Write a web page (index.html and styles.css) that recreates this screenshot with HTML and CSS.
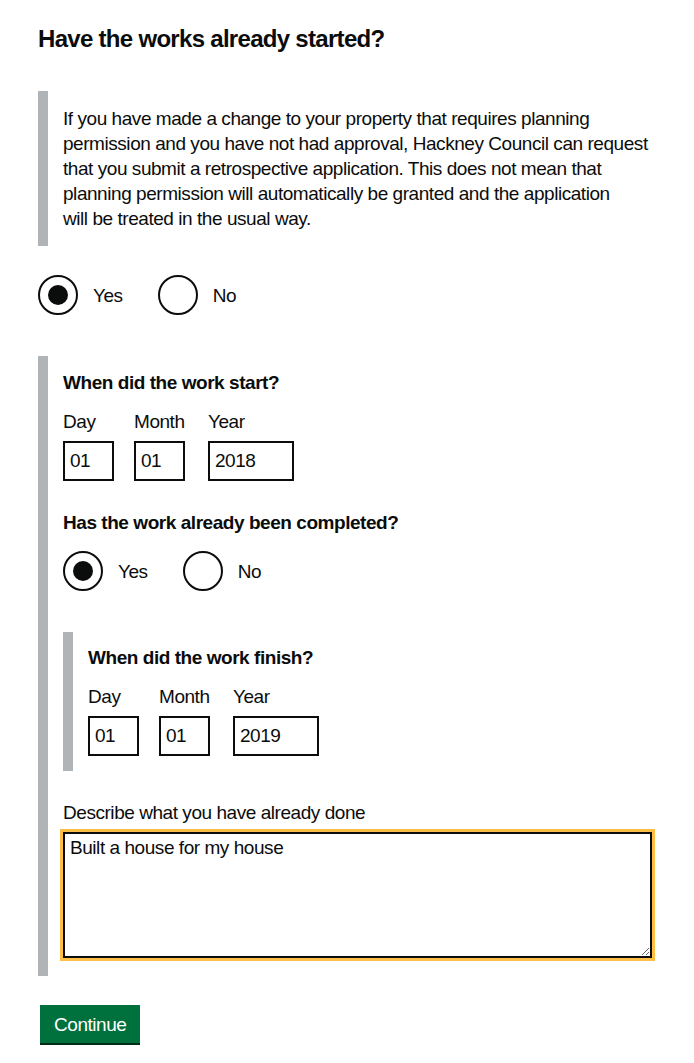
FILE: index.html
```html
<!DOCTYPE html>
<html lang="en">
<head>
<meta charset="utf-8">
<title>Have the works already started?</title>
<link rel="stylesheet" href="styles.css">
</head>
<body>
<main class="page">
  <h1 class="heading">Have the works already started?</h1>

  <div class="inset">If you have made a change to your property that requires planning permission and you have not had approval, Hackney Council can request that you submit a retrospective application. This does not mean that planning permission will automatically be granted and the application<br>will be treated in the usual way.</div>

  <div class="radios radios-main">
    <label class="radio"><span class="radio-circle is-checked"></span><span class="radio-label">Yes</span></label>
    <label class="radio"><span class="radio-circle"></span><span class="radio-label">No</span></label>
  </div>

  <div class="conditional conditional-outer">
    <div class="legend">When did the work start?</div>
    <div class="date">
      <div class="date-item item-day"><label class="date-label">Day</label><div class="input input-2">01</div></div>
      <div class="date-item item-month"><label class="date-label">Month</label><div class="input input-2">01</div></div>
      <div class="date-item item-year"><label class="date-label">Year</label><div class="input input-4">2018</div></div>
    </div>

    <div class="legend legend-completed">Has the work already been completed?</div>
    <div class="radios radios-inner">
      <label class="radio"><span class="radio-circle is-checked"></span><span class="radio-label">Yes</span></label>
      <label class="radio"><span class="radio-circle"></span><span class="radio-label">No</span></label>
    </div>

    <div class="conditional conditional-inner">
      <div class="legend">When did the work finish?</div>
      <div class="date">
        <div class="date-item item-day"><label class="date-label">Day</label><div class="input input-2">01</div></div>
        <div class="date-item item-month"><label class="date-label">Month</label><div class="input input-2">01</div></div>
        <div class="date-item item-year"><label class="date-label">Year</label><div class="input input-4">2019</div></div>
      </div>
    </div>

    <label class="field-label" for="done">Describe what you have already done</label>
    <textarea class="textarea" id="done" rows="5">Built a house for my house</textarea>
  </div>

  <button class="button" type="button">Continue</button>
</main>
</body>
</html>
```

FILE: styles.css
```css
* { box-sizing: border-box; }

body {
  margin: 0;
  background: #ffffff;
  color: #0b0c0c;
  font-family: "Liberation Sans", Arial, sans-serif;
  font-size: 19px;
  line-height: 25px;
  letter-spacing: -0.45px;
}

.page {
  width: 652px;
  padding: 24px 0 20px 38px;
}

.heading {
  margin: 0 0 37px;
  font-size: 24px;
  line-height: 30px;
  font-weight: 700;
  letter-spacing: -0.7px;
}

.inset {
  border-left: 10px solid #b1b4b6;
  padding: 15px 0 15px 15px;
  margin: 0 0 29px;
}

.radios {
  display: flex;
  gap: 20px;
}

.radios-main { margin-bottom: 41px; }
.radios-inner { margin-bottom: 41px; }

.radio {
  display: flex;
  align-items: center;
  height: 40px;
}

.radio-circle {
  position: relative;
  width: 40px;
  height: 40px;
  border: 2px solid #0b0c0c;
  border-radius: 50%;
  flex: none;
}

.radio-circle.is-checked::after {
  content: "";
  position: absolute;
  left: 8px;
  top: 8px;
  width: 20px;
  height: 20px;
  border-radius: 50%;
  background: #0b0c0c;
}

.radio-label {
  padding: 0 15px;
}

.conditional {
  border-left: 10px solid #b1b4b6;
  padding-left: 15px;
}

.conditional-outer {
  padding-top: 13.5px;
  padding-bottom: 18px;
  margin-bottom: 29px;
}

.conditional-inner {
  padding-top: 12.5px;
  padding-bottom: 15px;
  margin-bottom: 28.5px;
}

.legend {
  font-weight: 700;
  margin-bottom: 14px;
}

.legend-completed {
  margin-top: 28.5px;
  margin-bottom: 16.5px;
}

.date {
  display: flex;
  gap: 20px;
}

.item-day { width: 51px; }
.item-month { width: 54px; }
.item-year { width: 86px; }

.date-label {
  display: block;
  margin-bottom: 7.5px;
}

.input {
  height: 40px;
  border: 2px solid #0b0c0c;
  padding: 5px;
  line-height: 26px;
}

.input-2 { width: 51px; }
.input-4 { width: 86px; }

.field-label {
  display: block;
  margin-bottom: 7.5px;
}

.textarea {
  display: block;
  width: 100%;
  height: 126px;
  margin: 0;
  border: 2px solid #0b0c0c;
  padding: 1px 5px 5px;
  font-family: inherit;
  font-size: 19px;
  line-height: 25px;
  letter-spacing: -0.45px;
  color: #0b0c0c;
  outline: 3px solid #ffbf47;
  outline-offset: 0;
  resize: vertical;
}

.button {
  display: block;
  margin: 0 0 0 2px;
  padding: 8px 12px 7px;
  border: 2px solid transparent;
  background: #00703c;
  color: #ffffff;
  font-family: inherit;
  font-size: 19px;
  line-height: 19px;
  letter-spacing: -0.45px;
  box-shadow: 0 2px 0 #002d18;
  border-radius: 0;
  cursor: pointer;
}
```
